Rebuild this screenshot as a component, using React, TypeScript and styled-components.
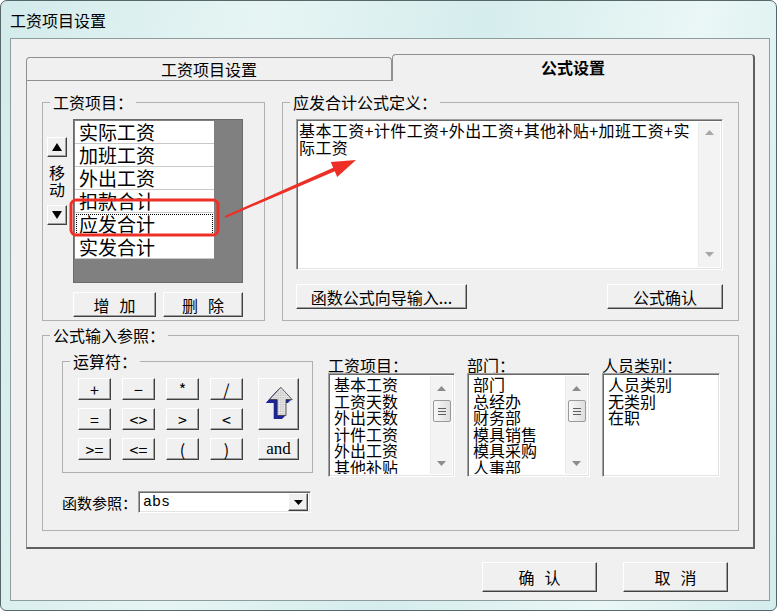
import styled, { createGlobalStyle, css } from "styled-components"

const GlobalStyle = createGlobalStyle`
  html, body { margin: 0; padding: 0; background: #ffffff; }
  body { font-family: "Noto Sans CJK SC", "Noto Sans", sans-serif; color: #000; }
  *, *::before, *::after { box-sizing: border-box; }
`

const salaryItems = ["实际工资", "加班工资", "外出工资", "扣款合计", "应发合计", "实发合计"]
const refItems = ["基本工资", "工资天数", "外出天数", "计件工资", "外出工资", "其他补贴"]
const deptItems = ["部门", "总经办", "财务部", "模具销售", "模具采购", "人事部"]
const kindItems = ["人员类别", "无类别", "在职"]
const opsTop = ["+", "−", "*", "/"]
const opsMid = ["=", "<>", ">", "<"]
const opsBottom = [">=", "<=", "(", ")"]

// windows classic raised / sunken edges
const raised = css`
  background: #f0f0f0;
  border: 1px solid;
  border-color: #ffffff #404040 #404040 #ffffff;
  box-shadow: inset -1px -1px 0 #a0a0a0;
`

const sunken = css`
  background: #ffffff;
  border: 1px solid;
  border-color: #a0a0a0 #ffffff #ffffff #a0a0a0;
  box-shadow: inset 1px 1px 0 #696969, inset -1px -1px 0 #e3e3e3;
`

const Window = styled.div`
  position: relative;
  width: 777px;
  height: 611px;
  display: flex;
  flex-direction: column;
  background: linear-gradient(100deg, #d3ebeb 0%, #e6f5f4 30%, #d6eded 55%, #eaf7f6 80%, #d3ecec 100%);
  border: 1px solid #55676a;
  border-radius: 7px 7px 6px 6px;
  overflow: hidden;
`

const TitleBar = styled.div`
  height: 37px;
  padding-left: 9px;
  display: flex;
  align-items: center;
  font-size: 16px;
`

const Client = styled.div`
  flex: 1;
  margin: 0 6px 9px 9px;
  padding: 15px 14px 0 15px;
  background: #f0f0f0;
  border: 1px solid #8f9c9c;
  display: flex;
  flex-direction: column;
`

const TabControl = styled.div`
  height: 495px;
  display: flex;
  flex-direction: column;
`

const TabStrip = styled.div`
  height: 26px;
  display: flex;
  align-items: flex-end;
`

const Tab = styled.div<{ $w: number; $active?: boolean }>`
  position: relative;
  width: ${p => p.$w}px;
  height: ${p => (p.$active ? 27 : 23)}px;
  margin-bottom: ${p => (p.$active ? -1 : 0)}px;
  z-index: ${p => (p.$active ? 1 : 0)};
  background: #f0f0f0;
  border: 1px solid #8f8f8f;
  border-bottom: none;
  border-right: ${p => (p.$active ? "2px solid #606060" : "1px solid #8f8f8f")};
  border-radius: 4px 4px 0 0;
  display: flex;
  align-items: center;
  justify-content: center;
  padding-bottom: ${p => (p.$active ? 2 : 0)}px;
  font-size: 16px;
  font-weight: ${p => (p.$active ? 700 : 400)};
`

const Panel = styled.div`
  flex: 1;
  border: 1px solid #8f8f8f;
  border-right: 2px solid #606060;
  border-bottom: 2px solid #606060;
  padding: 11px 14px 0 15px;
  display: flex;
  flex-direction: column;
  gap: 4px;
`

const TopRow = styled.div`
  display: flex;
  gap: 17px;
`

const Group = styled.fieldset<{ $w: number; $h: number }>`
  width: ${p => p.$w}px;
  height: ${p => p.$h}px;
  margin: 0;
  padding: 0;
  min-width: 0;
  border: 1px solid #b0b0b0;
`

const Legend = styled.legend`
  margin-left: 7px;
  padding: 0 3px;
  font-size: 16px;
  line-height: 20px;
`

const ItemsBody = styled.div`
  display: flex;
  gap: 6px;
  padding: 7px 0 0 4px;
`

const MoveColumn = styled.div`
  width: 20px;
  padding-top: 18px;
  display: flex;
  flex-direction: column;
  align-items: center;
  gap: 7px;
`

const MoveButton = styled.div`
  ${raised};
  width: 20px;
  height: 20px;
  display: flex;
  align-items: center;
  justify-content: center;
`

const MoveLabel = styled.div`
  width: 16px;
  font-size: 16px;
  line-height: 17px;
  word-break: break-all;
`

const ItemsColumn = styled.div`
  display: flex;
  flex-direction: column;
  gap: 9px;
`

const ItemGrid = styled.div`
  width: 170px;
  height: 164px;
  padding: 1px;
  background: #808080;
  border: 1px solid #6a6a6a;
`

const ItemRow = styled.div<{ $selected?: boolean }>`
  width: 139px;
  height: 23px;
  padding-left: 4px;
  background: #ffffff;
  border-bottom: 1px solid #c8c8c8;
  font-size: 19px;
  line-height: 22px;
  outline: ${p => (p.$selected ? "1px dotted #000" : "none")};
  outline-offset: -2px;
`

const ButtonRow = styled.div<{ $gap: number }>`
  display: flex;
  gap: ${p => p.$gap}px;
`

const Button = styled.div<{ $w: number; $h: number; $spacing?: number }>`
  ${raised};
  width: ${p => p.$w}px;
  height: ${p => p.$h}px;
  display: flex;
  align-items: center;
  justify-content: center;
  font-size: 16px;
  white-space: nowrap;
  letter-spacing: ${p => p.$spacing ?? 0}px;
  padding-left: ${p => p.$spacing ?? 0}px;
`

const FormulaBody = styled.div`
  padding: 7px 0 0 13px;
  display: flex;
  flex-direction: column;
  gap: 14px;
`

const FormulaBox = styled.div`
  ${sunken};
  width: 427px;
  height: 151px;
  display: flex;
  padding: 2px;
`

const FormulaText = styled.div`
  flex: 1;
  padding: 0 2px 0 0;
  font-size: 16px;
  line-height: 17px;
  letter-spacing: 0.4px;
  word-break: break-all;
`

const ScrollBar = styled.div<{ $w: number }>`
  width: ${p => p.$w}px;
  background: #f3f3f3;
  border-left: 1px solid #ececec;
  display: flex;
  flex-direction: column;
  align-items: center;
`

const ScrollArrow = styled.div<{ $h: number }>`
  height: ${p => p.$h}px;
  display: flex;
  align-items: center;
  justify-content: center;
`

const ScrollGap = styled.div`
  flex: 1;
`

const Thumb = styled.div`
  width: 18px;
  height: 22px;
  border: 1px solid #9a9a9a;
  border-radius: 2px;
  background: linear-gradient(90deg, #f8f8f8, #dedede);
  display: flex;
  align-items: center;
  justify-content: center;
`

const Grip = styled.span`
  width: 8px;
  height: 1px;
  background: #606060;
  box-shadow: 0 3px 0 #606060, 0 -3px 0 #606060;
`

const LowerBody = styled.div`
  display: flex;
  gap: 15px;
  padding: 6px 0 0 19px;
`

const LeftColumn = styled.div`
  display: flex;
  flex-direction: column;
  gap: 18px;
`

const OperatorGrid = styled.div`
  display: grid;
  grid-template-columns: repeat(4, 33px) 45px;
  grid-template-rows: repeat(3, 22px);
  column-gap: 11px;
  row-gap: 8px;
  padding: 7px 0 0 15px;
`

const OpButton = styled.div<{ $serif?: boolean }>`
  ${raised};
  display: flex;
  align-items: center;
  justify-content: center;
  font-family: ${p => (p.$serif ? '"Liberation Serif", serif' : '"Noto Sans CJK SC", sans-serif')};
  font-size: ${p => (p.$serif ? 17 : 16)}px;
  width: ${p => (p.$serif ? "41px" : "auto")};
  margin-left: ${p => (p.$serif ? "4px" : "0")};
`

const BigArrowButton = styled.div`
  ${raised};
  grid-row: span 2;
  width: 41px;
  margin-left: 4px;
  display: flex;
  align-items: center;
  justify-content: center;
`

const FuncRow = styled.div`
  display: flex;
  align-items: center;
  height: 22px;
`

const FuncLabel = styled.div`
  width: 76px;
  font-size: 15px;
  white-space: nowrap;
`

const Combo = styled.div`
  ${sunken};
  width: 173px;
  height: 22px;
  padding: 2px;
  display: flex;
  align-items: center;
`

const ComboText = styled.div`
  flex: 1;
  padding-left: 2px;
  font-family: "Liberation Mono", monospace;
  font-size: 15px;
`

const ComboButton = styled.div`
  ${raised};
  width: 20px;
  height: 18px;
  display: flex;
  align-items: center;
  justify-content: center;
`

const ListColumn = styled.div`
  padding-top: 6px;
  display: flex;
  flex-direction: column;
`

const ListLabel = styled.div`
  font-size: 16px;
  line-height: 16px;
  white-space: nowrap;
`

const ListBox = styled.div<{ $w: number }>`
  ${sunken};
  width: ${p => p.$w}px;
  height: 104px;
  padding: 2px;
  display: flex;
`

const ListItems = styled.div`
  flex: 1;
  padding-left: 3px;
  font-size: 16px;
  line-height: 16.6px;
  overflow: hidden;
`

const DialogButtons = styled.div`
  margin-top: 13px;
  margin-right: 27px;
  display: flex;
  justify-content: flex-end;
  gap: 26px;
`

const Overlay = styled.svg`
  position: absolute;
  top: -1px;
  left: -1px;
  pointer-events: none;
`

const Tri = ({ dir, w, h, color }: { dir: "up" | "down"; w: number; h: number; color: string }) => (
  <svg width={w} height={h} viewBox={`0 0 ${w} ${h}`}>
    <polygon points={dir === "up" ? `0,${h} ${w / 2},0 ${w},${h}` : `0,0 ${w},0 ${w / 2},${h}`} fill={color} />
  </svg>
)

const arrowFace = "19,1 32,15 25,15 25,33 15,33 15,15 6,15"

const BigArrow = () => (
  <svg width="30" height="36" viewBox="0 0 34 40">
    <defs>
      <pattern id="dots" width="2" height="2" patternUnits="userSpaceOnUse">
        <rect width="2" height="2" fill="#e4e4e4" />
        <rect width="1" height="1" fill="#b8b8b8" />
      </pattern>
    </defs>
    {[4, 3, 2, 1].map(k => (
      <polygon key={k} points={arrowFace} transform={`translate(${-k} ${k})`} fill="#1d2597" />
    ))}
    <polygon points={arrowFace} fill="url(#dots)" stroke="#2a2a2a" strokeWidth="0.8" />
  </svg>
)

const ListScroll = () => (
  <ScrollBar $w={22}>
    <ScrollArrow $h={24}><Tri dir="up" w={9} h={5} color="#8c8c8c" /></ScrollArrow>
    <Thumb><Grip /></Thumb>
    <ScrollGap />
    <ScrollArrow $h={22}><Tri dir="down" w={9} h={5} color="#8c8c8c" /></ScrollArrow>
  </ScrollBar>
)

export default function App() {
  return (
    <>
      <GlobalStyle />
      <Window>
        <TitleBar>工资项目设置</TitleBar>
        <Client>
          <TabControl>
            <TabStrip>
              <Tab $w={366}>工资项目设置</Tab>
              <Tab $w={363} $active>公式设置</Tab>
            </TabStrip>
            <Panel>
              <TopRow>
                <Group $w={223} $h={229}>
                  <Legend>工资项目：</Legend>
                  <ItemsBody>
                    <MoveColumn>
                      <MoveButton><Tri dir="up" w={10} h={8} color="#000" /></MoveButton>
                      <MoveLabel>移动</MoveLabel>
                      <MoveButton><Tri dir="down" w={10} h={8} color="#000" /></MoveButton>
                    </MoveColumn>
                    <ItemsColumn>
                      <ItemGrid>
                        {salaryItems.map((t, i) => (
                          <ItemRow key={t} $selected={i === 4}>{t}</ItemRow>
                        ))}
                      </ItemGrid>
                      <ButtonRow $gap={7}>
                        <Button $w={83} $h={25} $spacing={10}>增加</Button>
                        <Button $w={80} $h={25} $spacing={10}>删除</Button>
                      </ButtonRow>
                    </ItemsColumn>
                  </ItemsBody>
                </Group>

                <Group $w={457} $h={229}>
                  <Legend>应发合计公式定义：</Legend>
                  <FormulaBody>
                    <FormulaBox>
                      <FormulaText>基本工资+计件工资+外出工资+其他补贴+加班工资+实际工资</FormulaText>
                      <ScrollBar $w={22}>
                        <ScrollArrow $h={20}><Tri dir="up" w={9} h={5} color="#a8a8a8" /></ScrollArrow>
                        <ScrollGap />
                        <ScrollArrow $h={26}><Tri dir="down" w={9} h={5} color="#a8a8a8" /></ScrollArrow>
                      </ScrollBar>
                    </FormulaBox>
                    <ButtonRow $gap={140}>
                      <Button $w={171} $h={25}>函数公式向导输入...</Button>
                      <Button $w={116} $h={25}>公式确认</Button>
                    </ButtonRow>
                  </FormulaBody>
                </Group>
              </TopRow>

              <Group $w={697} $h={206}>
                <Legend>公式输入参照：</Legend>
                <LowerBody>
                  <LeftColumn>
                    <Group $w={251} $h={122}>
                      <Legend>运算符：</Legend>
                      <OperatorGrid>
                        {opsTop.map(o => <OpButton key={o}>{o}</OpButton>)}
                        <BigArrowButton><BigArrow /></BigArrowButton>
                        {opsMid.map(o => <OpButton key={o}>{o}</OpButton>)}
                        {opsBottom.map(o => <OpButton key={o}>{o}</OpButton>)}
                        <OpButton $serif>and</OpButton>
                      </OperatorGrid>
                    </Group>
                    <FuncRow>
                      <FuncLabel>函数参照：</FuncLabel>
                      <Combo>
                        <ComboText>abs</ComboText>
                        <ComboButton><Tri dir="down" w={9} h={5} color="#000" /></ComboButton>
                      </Combo>
                    </FuncRow>
                  </LeftColumn>

                  <ButtonRow $gap={12}>
                    <ListColumn>
                      <ListLabel>工资项目：</ListLabel>
                      <ListBox $w={127}>
                        <ListItems>{refItems.map(t => <div key={t}>{t}</div>)}</ListItems>
                        <ListScroll />
                      </ListBox>
                    </ListColumn>
                    <ListColumn>
                      <ListLabel>部门：</ListLabel>
                      <ListBox $w={123}>
                        <ListItems>{deptItems.map(t => <div key={t}>{t}</div>)}</ListItems>
                        <ListScroll />
                      </ListBox>
                    </ListColumn>
                    <ListColumn>
                      <ListLabel>人员类别：</ListLabel>
                      <ListBox $w={118}>
                        <ListItems>{kindItems.map(t => <div key={t}>{t}</div>)}</ListItems>
                      </ListBox>
                    </ListColumn>
                  </ButtonRow>
                </LowerBody>
              </Group>
            </Panel>
          </TabControl>

          <DialogButtons>
            <Button $w={115} $h={30} $spacing={10}>确认</Button>
            <Button $w={105} $h={30} $spacing={10}>取消</Button>
          </DialogButtons>
        </Client>

        {/* red annotation drawn over the dialog */}
        <Overlay width="777" height="611" viewBox="0 0 777 611">
          <rect x="71" y="200" width="147" height="35" rx="5" fill="none" stroke="#ee2f26" strokeWidth="3" />
          <polygon
            points="225.4,217.9 334.8,171.3 337.2,176.9 356,160 330.8,162.1 333.2,167.7 224.6,216.1"
            fill="#ee2f26"
          />
        </Overlay>
      </Window>
    </>
  )
}
